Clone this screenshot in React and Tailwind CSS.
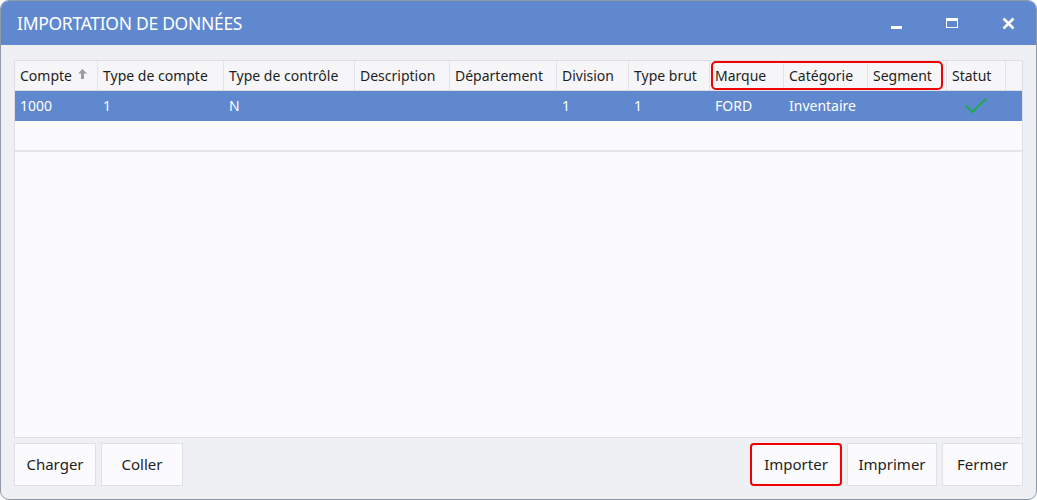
import React from 'react';

const columns = [
  { key: 'compte', label: 'Compte', w: 83, sort: true },
  { key: 'typeCompte', label: 'Type de compte', w: 126 },
  { key: 'typeControle', label: 'Type de contrôle', w: 131 },
  { key: 'description', label: 'Description', w: 95 },
  { key: 'departement', label: 'Département', w: 107 },
  { key: 'division', label: 'Division', w: 72 },
  { key: 'typeBrut', label: 'Type brut', w: 81 },
  { key: 'marque', label: 'Marque', w: 74 },
  { key: 'categorie', label: 'Catégorie', w: 84 },
  { key: 'segment', label: 'Segment', w: 79 },
  { key: 'statut', label: 'Statut', w: 59 },
];

const rows = [
  {
    compte: '1000',
    typeCompte: '1',
    typeControle: 'N',
    description: '',
    departement: '',
    division: '1',
    typeBrut: '1',
    marque: 'FORD',
    categorie: 'Inventaire',
    segment: '',
    statut: 'ok',
  },
];

const Check = () => (
  <svg width="24" height="17" viewBox="0 0 24 17" fill="none">
    <path d="M2 8.5 L8.5 15 L22 1.5" stroke="#1faa4f" strokeWidth="2" />
  </svg>
);

const App = () => {
  return (
    <div
      className="w-[1037px] h-[500px] bg-white"
      style={{ fontFamily: '"Noto Sans", "Open Sans", sans-serif' }}
    >
      <div className="w-full h-full flex flex-col rounded-[9px] border border-[#8e9aa8] overflow-hidden bg-[#eff0f4]">
        {/* title bar */}
        <div className="h-[44px] shrink-0 bg-[#5f88cf] flex items-center pl-[16px] text-white">
          <span className="text-[17.5px] tracking-[-0.3px] flex-1">IMPORTATION DE DONNÉES</span>
          <div className="flex items-center h-full">
            <div className="w-[56px] h-full flex items-center justify-center">
              <div className="w-[11px] h-[3px] bg-white mt-[8px]" />
            </div>
            <div className="w-[56px] h-full flex items-center justify-center">
              <div className="w-[12px] h-[10px] border border-white border-t-[3px]" />
            </div>
            <div className="w-[56px] h-full flex items-center justify-center">
              <svg width="13" height="13" viewBox="0 0 13 13">
                <path d="M1.5 1.5 L11.5 11.5 M11.5 1.5 L1.5 11.5" stroke="white" strokeWidth="2.6" />
              </svg>
            </div>
          </div>
        </div>

        {/* body */}
        <div className="flex-1 flex flex-col px-[13px] pt-[15px] pb-[13px]">
          <div className="flex-1 border border-[#dcdee3] bg-[#fbfbfd] flex flex-col text-[14px] text-[#1e1e1e]">
            {/* header */}
            <div className="relative h-[30px] flex bg-[#f6f6f8] border-b border-[#dcdee3]">
              {columns.map((c) => (
                <div
                  key={c.key}
                  style={{ width: c.w }}
                  className="shrink-0 h-full flex items-center pl-[5px] border-r border-[#e1e3e7] whitespace-nowrap overflow-hidden"
                >
                  {c.label}
                  {c.sort && (
                    <svg className="ml-[6px] mb-[3px]" width="9" height="10" viewBox="0 0 9 10">
                      <path d="M4.5 0 L9 4.5 L6 4.5 L6 10 L3 10 L3 4.5 L0 4.5 Z" fill="#9a9ca0" />
                    </svg>
                  )}
                </div>
              ))}
              <div className="flex-1" />
              <div className="absolute left-[696px] top-0 w-[232px] h-[29px] border-2 border-[#f00000] rounded-[5px]" />
            </div>

            {/* rows */}
            {rows.map((r, i) => (
              <div key={i} className="h-[30px] flex bg-[#5f88cf] text-white pb-[1px]">
                {columns.map((c) => (
                  <div
                    key={c.key}
                    style={{ width: c.w }}
                    className={
                      'shrink-0 h-full flex items-center whitespace-nowrap ' +
                      (c.key === 'statut' ? 'justify-center pr-[2px]' : 'pl-[5px]')
                    }
                  >
                    {c.key === 'statut' ? <Check /> : r[c.key]}
                  </div>
                ))}
                <div className="flex-1" />
              </div>
            ))}
            <div className="h-[31px] border-b-2 border-[#e3e5e9]" />
          </div>

          {/* buttons */}
          <div className="mt-[5px] h-[43px] flex gap-[5px] text-[15px] text-[#1e1e1e]">
            <button className="w-[82px] h-full bg-[#fbfbfd] border border-[#dfe1e5]">Charger</button>
            <button className="w-[82px] h-full bg-[#fbfbfd] border border-[#dfe1e5]">Coller</button>
            <div className="flex-1" />
            <button className="w-[92px] h-full bg-[#fbfbfd] border-2 border-[#f00000] rounded-[4px]">Importer</button>
            <button className="w-[90px] h-full bg-[#fbfbfd] border border-[#dfe1e5]">Imprimer</button>
            <button className="w-[81px] h-full bg-[#fbfbfd] border border-[#dfe1e5]">Fermer</button>
          </div>
        </div>
      </div>
    </div>
  );
};

export default App;
